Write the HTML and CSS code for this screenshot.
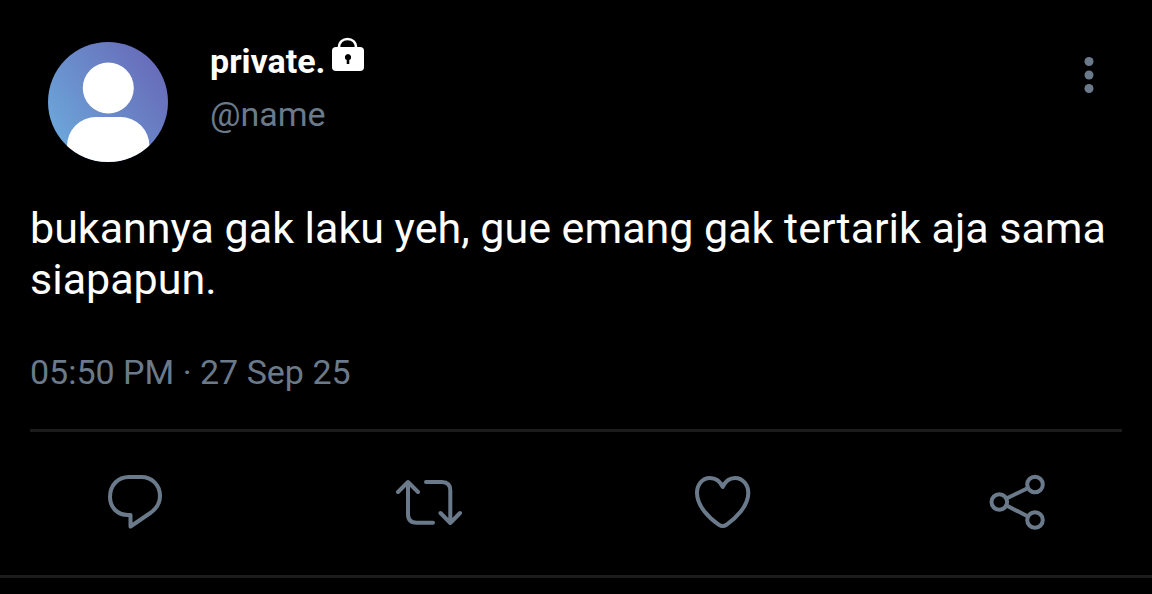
FILE: index.html
```html
<!DOCTYPE html>
<html lang="id">
<head>
<meta charset="utf-8">
<meta name="viewport" content="width=device-width, initial-scale=1">
<title>private. (@name)</title>
<link rel="stylesheet" href="styles.css">
</head>
<body>
<article class="post">
  <header class="post-header">
    <svg class="avatar" viewBox="0 0 120 120" role="img" aria-label="Avatar">
      <defs>
        <linearGradient id="sky" x1="0" y1="0.7" x2="0.85" y2="0.1">
          <stop offset="0" stop-color="#6ca6da"/>
          <stop offset="0.5" stop-color="#6a88c8"/>
          <stop offset="1" stop-color="#686cba"/>
        </linearGradient>
        <clipPath id="round"><circle cx="60" cy="60" r="60"/></clipPath>
      </defs>
      <g clip-path="url(#round)">
        <rect width="120" height="120" fill="url(#sky)"/>
        <circle cx="60.3" cy="46" r="25.5" fill="#fff"/>
        <rect x="19" y="75" width="82.500" height="70" rx="29" fill="#fff"/>
      </g>
    </svg>
    <div class="author">
      <div class="name-row">
        <span class="name">private.</span>
        <svg class="lock" viewBox="0 0 34 36" role="img" aria-label="Akun privat">
          <path d="M8 11C8 5 12 2 16.500 2S25 5 25 11" fill="none" stroke="#fff" stroke-width="2.600"/>
          <rect x="1" y="10" width="32" height="24" rx="4" fill="#fff"/>
          <path d="M17 17a3.200 3.200 0 0 1 1.300 6.100V27h-2.600v-3.900A3.200 3.200 0 0 1 17 17z" fill="#000"/>
        </svg>
      </div>
      <span class="handle">@name</span>
    </div>
    <button class="more" type="button" aria-label="Lainnya">
      <svg viewBox="0 0 10 38"><circle cx="5" cy="5.500" r="4.500"/><circle cx="5" cy="19" r="4.500"/><circle cx="5" cy="32.500" r="4.500"/></svg>
    </button>
  </header>
  <p class="body">bukannya gak laku yeh, gue emang gak tertarik aja sama siapapun.</p>
  <time class="date" datetime="2025-09-27T17:50">05:50 PM · 27 Sep 25</time>
  <footer class="actions">
    <button class="action" type="button" aria-label="Balas">
      <svg viewBox="0 0 90 80"><path d="M40.500 55H38C27 55 20 47 20 37C20 25 28 17 39 17H51C62 17 70 25 70 36C70 43 67 48 61 52.500L40.500 66.500Z"/></svg>
    </button>
    <button class="action" type="button" aria-label="Posting ulang">
      <svg viewBox="0 0 90 80"><path d="M14 32L24 22L34 32M24 22V54Q24 62.700 32.500 62.700H49M42 22H58Q66.300 22 66.300 30.500V62.500M56.500 53L66.300 63L76 53"/></svg>
    </button>
    <button class="action" type="button" aria-label="Suka">
      <svg viewBox="0 0 90 80"><path d="M44.700 27C42 21 37 18 32 18C24 18 19 25 19 33C19 46 31 58 41 64.800Q44.700 67.200 48.400 64.800C58 58 70.300 46 70.300 33C70.300 25 65 18 57 18C52 18 47.400 21 44.700 27Z"/></svg>
    </button>
    <button class="action" type="button" aria-label="Bagikan">
      <svg viewBox="0 0 90 80"><circle cx="27.300" cy="42" r="7.800"/><circle cx="63" cy="24.500" r="7.800"/><circle cx="63" cy="60" r="7.800"/><path d="M34.500 38.500L56 28M34.500 45.500L56 56.500"/></svg>
    </button>
  </footer>
</article>
</body>
</html>
```
FILE: styles.css
```css
* { box-sizing: border-box; }
body {
  margin: 0;
  background: #000;
  color: #fff;
  font-family: Roboto, "Liberation Sans", sans-serif;
}
button {
  padding: 0;
  border: 0;
  background: none;
  color: #6b7a8a;
  cursor: pointer;
}
svg { display: block; }
.post { border-bottom: 3px solid #1c1c1c; }
.post-header {
  display: flex;
  align-items: flex-start;
  padding: 36px 58px 0 48px;
}
.avatar {
  width: 120px;
  height: 120px;
  margin-top: 6px;
}
.author {
  flex: 1;
  margin-left: 42px;
}
.name-row {
  display: flex;
  align-items: flex-start;
  gap: 6px;
}
.name {
  font-size: 34px;
  font-weight: 700;
  line-height: 50px;
}
.lock {
  width: 34px;
  height: 36px;
  margin-top: 1px;
}
.handle {
  display: block;
  color: #6b7a8a;
  font-size: 34px;
  line-height: 56px;
}
.more { margin-top: 20px; }
.more svg {
  width: 10px;
  height: 38px;
  fill: currentColor;
}
.body {
  margin: 41px 30px 0;
  font-size: 43px;
  line-height: 51px;
}
.date {
  display: block;
  margin: 47px 30px 0;
  color: #6b7a8a;
  font-size: 34px;
  line-height: 40px;
}
.actions {
  display: flex;
  justify-content: space-between;
  margin: 37px 30px 0;
  padding: 28px 60px 35px;
  border-top: 3px solid #1c1c1c;
}
.action svg {
  width: 90px;
  height: 80px;
  fill: none;
  stroke: currentColor;
  stroke-width: 4;
  stroke-linecap: round;
  stroke-linejoin: round;
}
```
